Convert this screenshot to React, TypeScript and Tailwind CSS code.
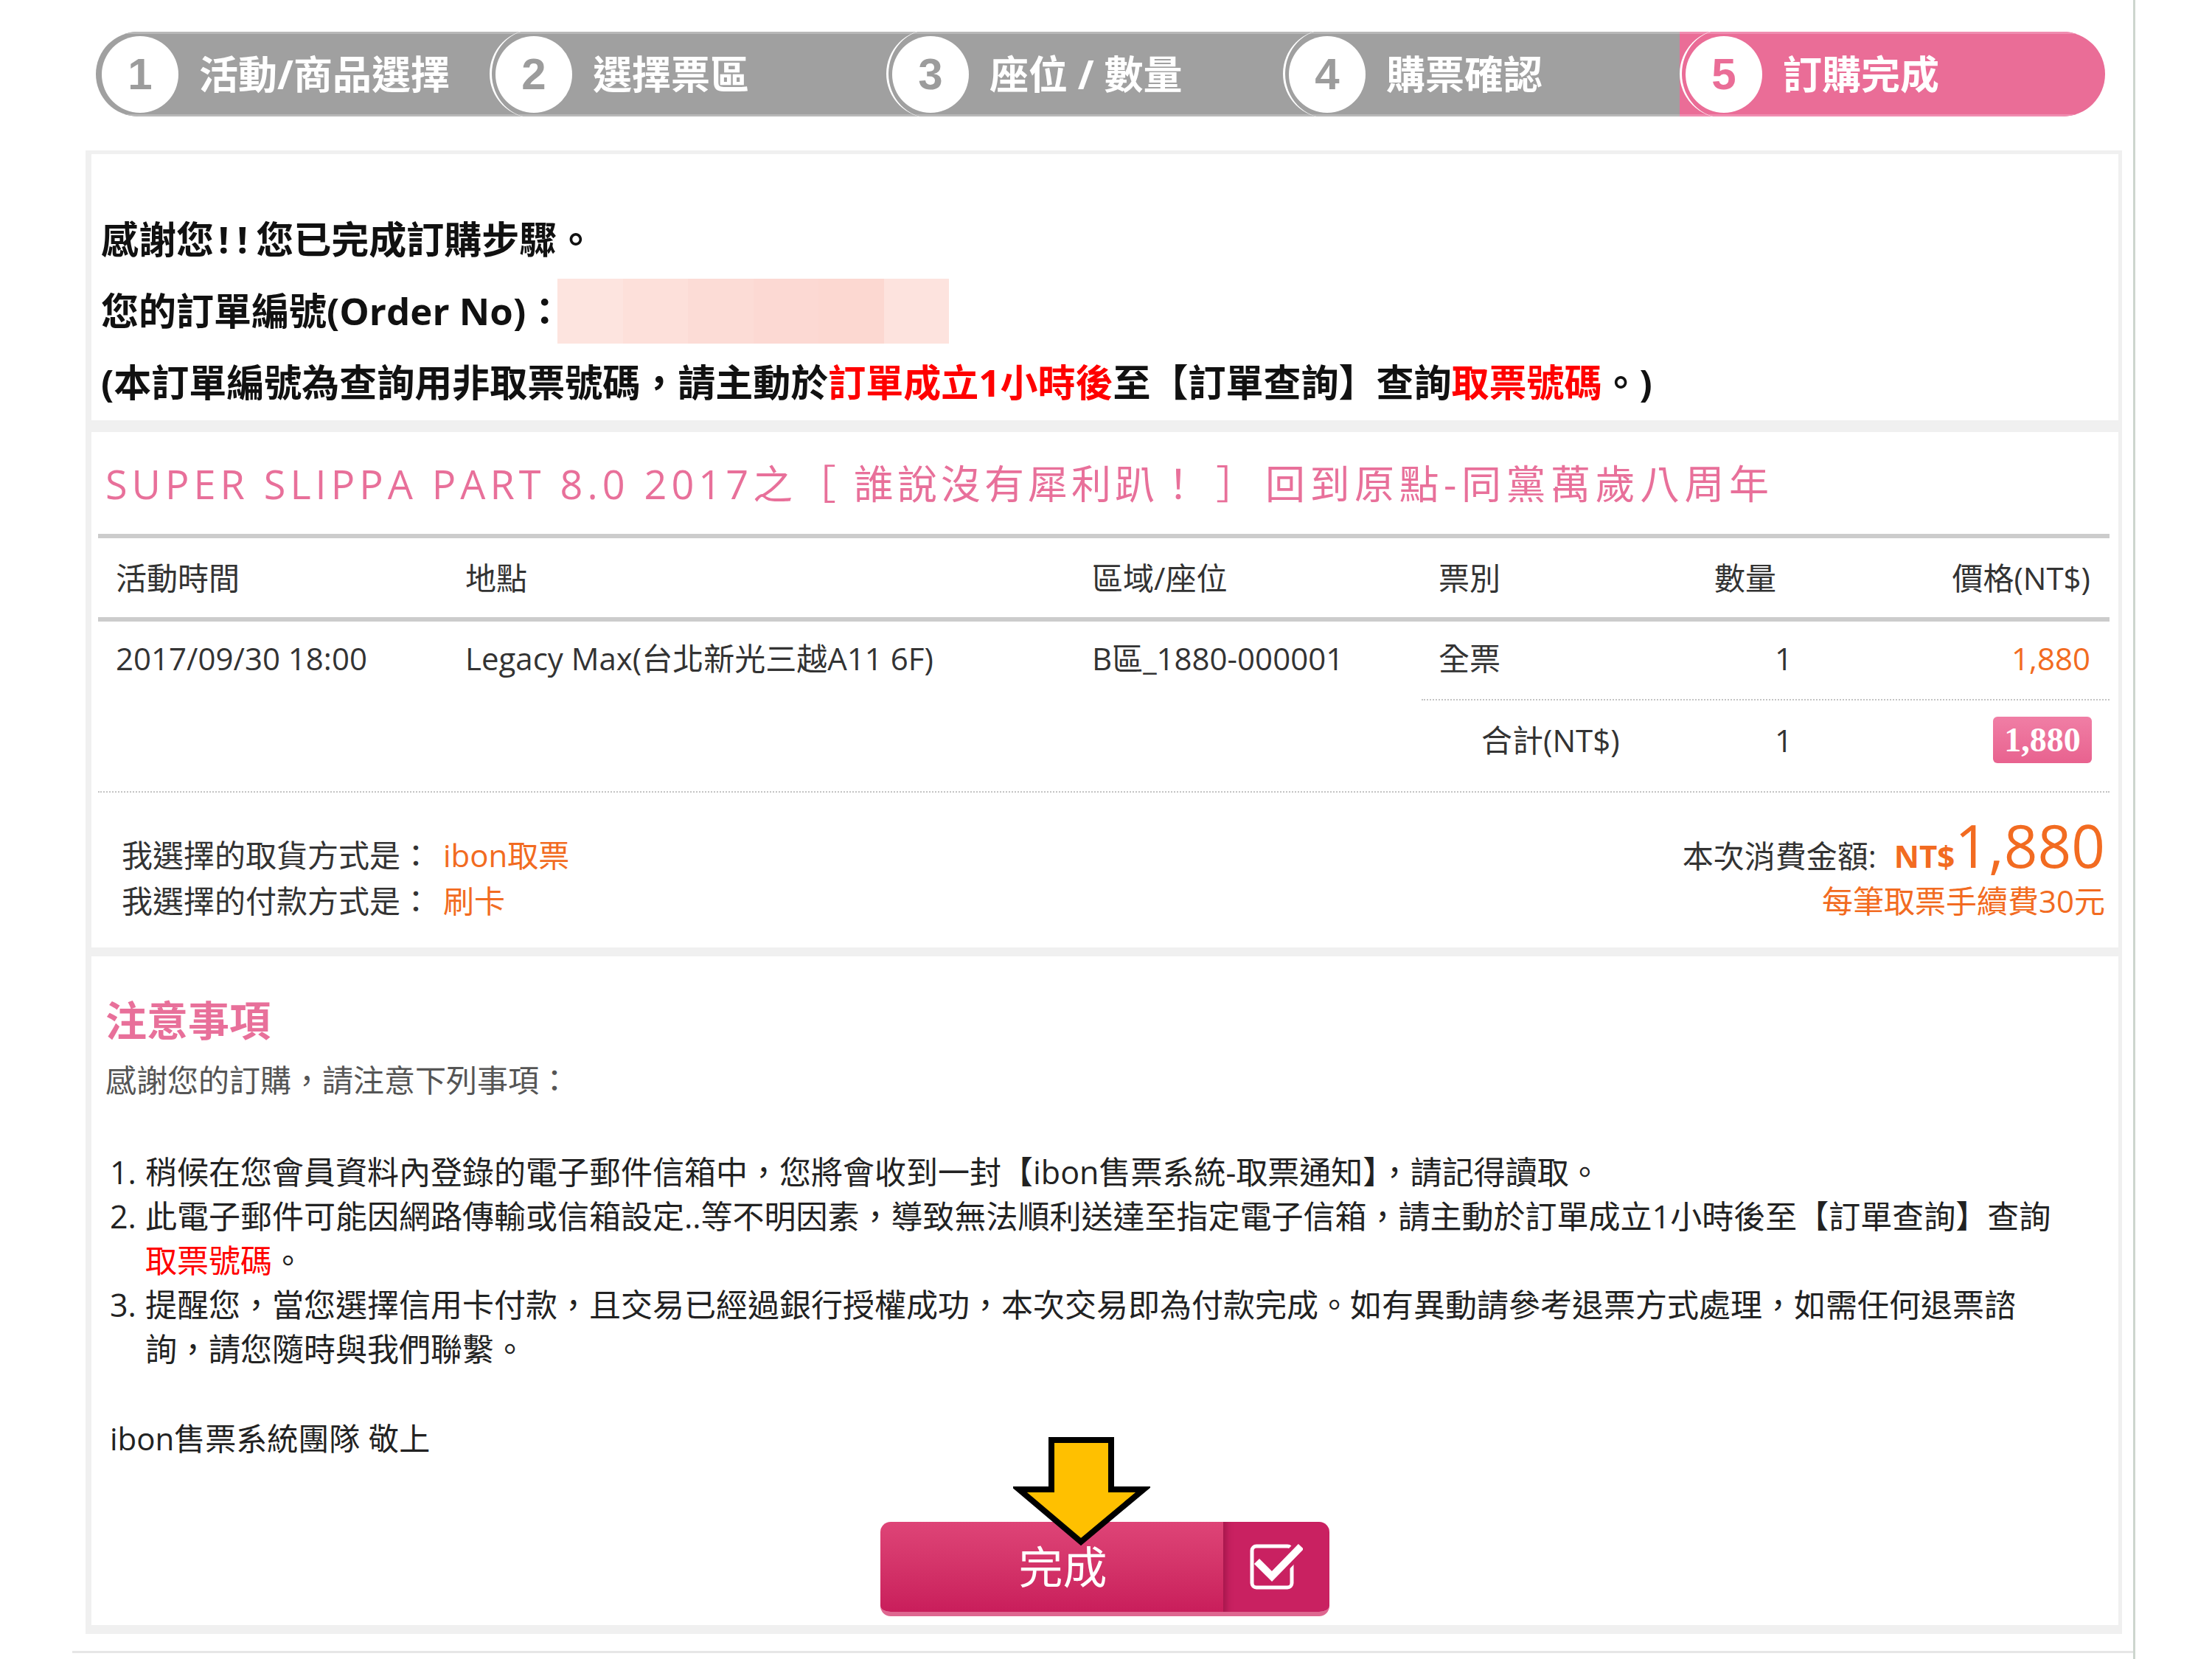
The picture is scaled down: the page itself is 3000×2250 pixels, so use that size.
import React from "react";

const steps = [
  { n: "1", label: "活動/商品選擇", w: "w-[534px]" },
  { n: "2", label: "選擇票區", w: "w-[538px]" },
  { n: "3", label: "座位 / 數量", w: "w-[538px]" },
  { n: "4", label: "購票確認", w: "w-[538px]" },
  { n: "5", label: "訂購完成", w: "flex-1" },
];

const redact = ["bg-[#fde4df]", "bg-[#fde0da]", "bg-[#fcdcd6]", "bg-[#fcd9d3]", "bg-[#fcd8d1]", "bg-[#fde3de]"];

function StepBar() {
  return (
    <div className="ml-[130px] flex h-[115px] w-[2725px] overflow-hidden rounded-full">
      {steps.map((s, i) => {
        const active = i === steps.length - 1;
        return (
          <div
            key={s.n}
            className={`relative flex h-full items-center border-y-[3px] pl-[8px] ${s.w} ${
              active ? "border-[#f08db0] bg-[#ea6d97]" : "border-[#b8b8b8] bg-[#a0a0a0]"
            }`}
          >
            {i > 0 && (
              <div className="absolute left-0 top-[-6px] h-[120px] w-[120px] rounded-full border-l-[3px] border-white" />
            )}
            <div className="relative flex h-[104px] w-[104px] shrink-0 items-center justify-center rounded-full bg-white">
              <span
                className={`font-['Liberation_Sans',sans-serif] text-[60px] font-bold leading-none ${
                  active ? "text-[#ea6d97]" : "text-[#9c9c9c]"
                }`}
              >
                {s.n}
              </span>
            </div>
            <span className="ml-[28px] whitespace-nowrap text-[53px] font-bold leading-none text-white">{s.label}</span>
          </div>
        );
      })}
    </div>
  );
}

function CheckIcon() {
  return (
    <svg width="72" height="64" viewBox="0 0 72 64">
      <rect x="3" y="4" width="54" height="56" rx="6" fill="none" stroke="#fff" strokeWidth="5" />
      <path d="M13 28 L30 45 L66 8" fill="none" stroke="#c92161" strokeWidth="20" strokeLinejoin="round" />
      <path d="M13 28 L30 45 L66 8" fill="none" stroke="#fff" strokeWidth="10" strokeLinecap="square" />
    </svg>
  );
}

function Arrow() {
  return (
    <svg className="absolute left-[180px] top-[-116px]" width="186" height="152" viewBox="0 0 186 152">
      <polygon
        points="52,5 133,5 133,72 177,72 92,143 8,72 52,72"
        fill="#ffc000"
        stroke="#000"
        strokeWidth="8"
        strokeLinejoin="miter"
      />
    </svg>
  );
}

export default function App() {
  return (
    <div className="h-[2250px] w-[3000px] bg-white font-['Open_Sans','Noto_Sans_CJK_TC',sans-serif]">
      <div className="h-full w-[2896px] border-r-[3px] border-[#cdd6ce] pt-[43px]">
        <StepBar />

        <div className="ml-[116px] mt-[46px] flex h-[2012px] w-[2762px] flex-col bg-[#f0f0f0] pb-[12px] pl-[8px] pr-[5px] pt-[5px]">
          {/* order done */}
          <section className="h-[361px] bg-white pl-[13px] pt-[67px] text-[51px] font-bold leading-[97px] text-[#111]">
            <p>
              感謝您<span className="pl-[6px] tracking-[11px]">!!</span>您已完成訂購步驟。
            </p>
            <p className="flex items-center">
              您的訂單編號(Order No)：
              <span className="-ml-[8px] flex h-[88px] w-[531px]">
                {redact.map((c, i) => (
                  <span key={i} className={`h-full flex-1 ${c}`} />
                ))}
              </span>
            </p>
            <p>
              (本訂單編號為查詢用非取票號碼，請主動於<span className="text-[#ff0000]">訂單成立1小時後</span>至【訂單查詢】查詢
              <span className="text-[#ff0000]">取票號碼</span>。)
            </p>
          </section>

          {/* event + table */}
          <section className="mt-[16px] h-[699px] bg-white pl-[9px] pr-[12px] pt-[35px]">
            <h1 className="whitespace-nowrap pl-[10px] text-[54px] leading-[70px] tracking-[5px] text-[#e8709a]">
              <span className="tracking-[6px]">SUPER SLIPPA PART 8.0 2017</span>之［ 誰說沒有犀利趴！ ］
              <span className="ml-[8px] tracking-[6.5px]">回到原點-同黨萬歲八周年</span>
            </h1>
            <div className="mt-[33px] h-[6px] bg-[#cccccc]" />
            <div className="grid h-[107px] grid-cols-[474px_850px_470px_374px_220px_1fr] items-center pl-[24px] pr-[26px] text-[42px] text-[#333]">
              <span>活動時間</span>
              <span>地點</span>
              <span>區域/座位</span>
              <span>票別</span>
              <span>數量</span>
              <span className="text-right">價格(NT$)</span>
            </div>
            <div className="h-[6px] bg-[#cccccc]" />
            <div className="grid h-[105px] grid-cols-[474px_850px_470px_374px_220px_1fr] items-center pb-[6px] pl-[24px] pr-[26px] text-[42px] text-[#333]">
              <span>2017/09/30 18:00</span>
              <span>Legacy Max(台北新光三越A11 6F)</span>
              <span>B區_1880-000001</span>
              <span>全票</span>
              <span className="pl-[82px]">1</span>
              <span className="text-right text-[#f26b21]">1,880</span>
            </div>
            <div className="ml-[1795px] border-t-[2px] border-dotted border-[#c4c4c4]" />
            <div className="grid h-[123px] grid-cols-[474px_850px_470px_374px_220px_1fr] items-center pb-[16px] pl-[24px] pr-[24px] text-[42px] text-[#333]">
              <span />
              <span />
              <span />
              <span className="pl-[58px]">合計(NT$)</span>
              <span className="pl-[82px]">1</span>
              <span className="flex justify-end">
                <span className="flex h-[63px] w-[134px] items-center justify-center rounded-[6px] bg-linear-to-b from-[#f07ea5] to-[#e8628f] font-['Liberation_Serif',serif] text-[46px] font-bold leading-none text-white">
                  1,880
                </span>
              </span>
            </div>
            <div className="border-t-[2px] border-dotted border-[#c4c4c4]" />
            <div className="flex justify-between pl-[32px] pr-[6px]">
              <div className="pt-[54px] text-[42px] leading-[62px] text-[#333]">
                <p>
                  我選擇的取貨方式是：<span className="pl-[16px] text-[#f26b21]">ibon取票</span>
                </p>
                <p>
                  我選擇的付款方式是：<span className="pl-[16px] text-[#f26b21]">刷卡</span>
                </p>
              </div>
              <div className="flex flex-col items-end pt-[31px]">
                <div className="flex items-baseline">
                  <span className="text-[42px] leading-none text-[#333]">本次消費金額:</span>
                  <span className="ml-[24px] text-[42px] font-bold leading-none text-[#f26b21]">NT$</span>
                  <span className="text-[80px] leading-none text-[#f26b21]">1,880</span>
                </div>
                <p className="mt-[5px] text-[42px] leading-[62px] text-[#f26b21]">每筆取票手續費30元</p>
              </div>
            </div>
          </section>

          {/* notes */}
          <section className="mt-[12px] h-[907px] bg-white pt-[50px]">
            <h2 className="pl-[19px] text-[56px] font-bold leading-[72px] text-[#e8709a]">注意事項</h2>
            <p className="mt-[16px] pl-[19px] text-[42px] leading-[60px] text-[#555]">感謝您的訂購，請注意下列事項：</p>
            <div className="mt-[65px] whitespace-nowrap pl-[25px] text-[43px] leading-[60px] text-[#222]">
              <div className="flex">
                <span className="w-[48px] shrink-0">1.</span>
                <span>稍候在您會員資料內登錄的電子郵件信箱中，您將會收到一封【ibon售票系統-取票通知】，請記得讀取。</span>
              </div>
              <div className="flex">
                <span className="w-[48px] shrink-0">2.</span>
                <span>
                  此電子郵件可能因網路傳輸或信箱設定..等不明因素，導致無法順利送達至指定電子信箱，請主動於訂單成立1小時後至【訂單查詢】查詢
                  <br />
                  <span className="text-[#ff0000]">取票號碼</span>。
                </span>
              </div>
              <div className="flex">
                <span className="w-[48px] shrink-0">3.</span>
                <span>
                  提醒您，當您選擇信用卡付款，且交易已經過銀行授權成功，本次交易即為付款完成。如有異動請參考退票方式處理，如需任何退票諮
                  <br />
                  詢，請您隨時與我們聯繫。
                </span>
              </div>
            </div>
            <p className="mt-[61px] pl-[25px] text-[42px] leading-[60px] text-[#222]">ibon售票系統團隊 敬上</p>

            <div className="relative mx-auto mt-[83px] h-[128px] w-[609px]">
              <div className="flex h-full w-full overflow-hidden rounded-[14px] border-b-[6px] border-[#de6790]">
                <div className="flex flex-1 items-center justify-center bg-linear-to-b from-[#de4477] to-[#c91d5b] pl-[30px] text-[60px] leading-none text-white">
                  完成
                </div>
                <div className="flex w-[144px] items-center justify-center bg-[#c92161] shadow-[inset_12px_0_10px_-8px_rgba(90,0,30,0.35)]">
                  <CheckIcon />
                </div>
              </div>
              <Arrow />
            </div>
          </section>
        </div>

        <div className="ml-[98px] mt-[23px] h-[3px] w-[2795px] bg-[#e6e6e6]" />
      </div>
    </div>
  );
}
